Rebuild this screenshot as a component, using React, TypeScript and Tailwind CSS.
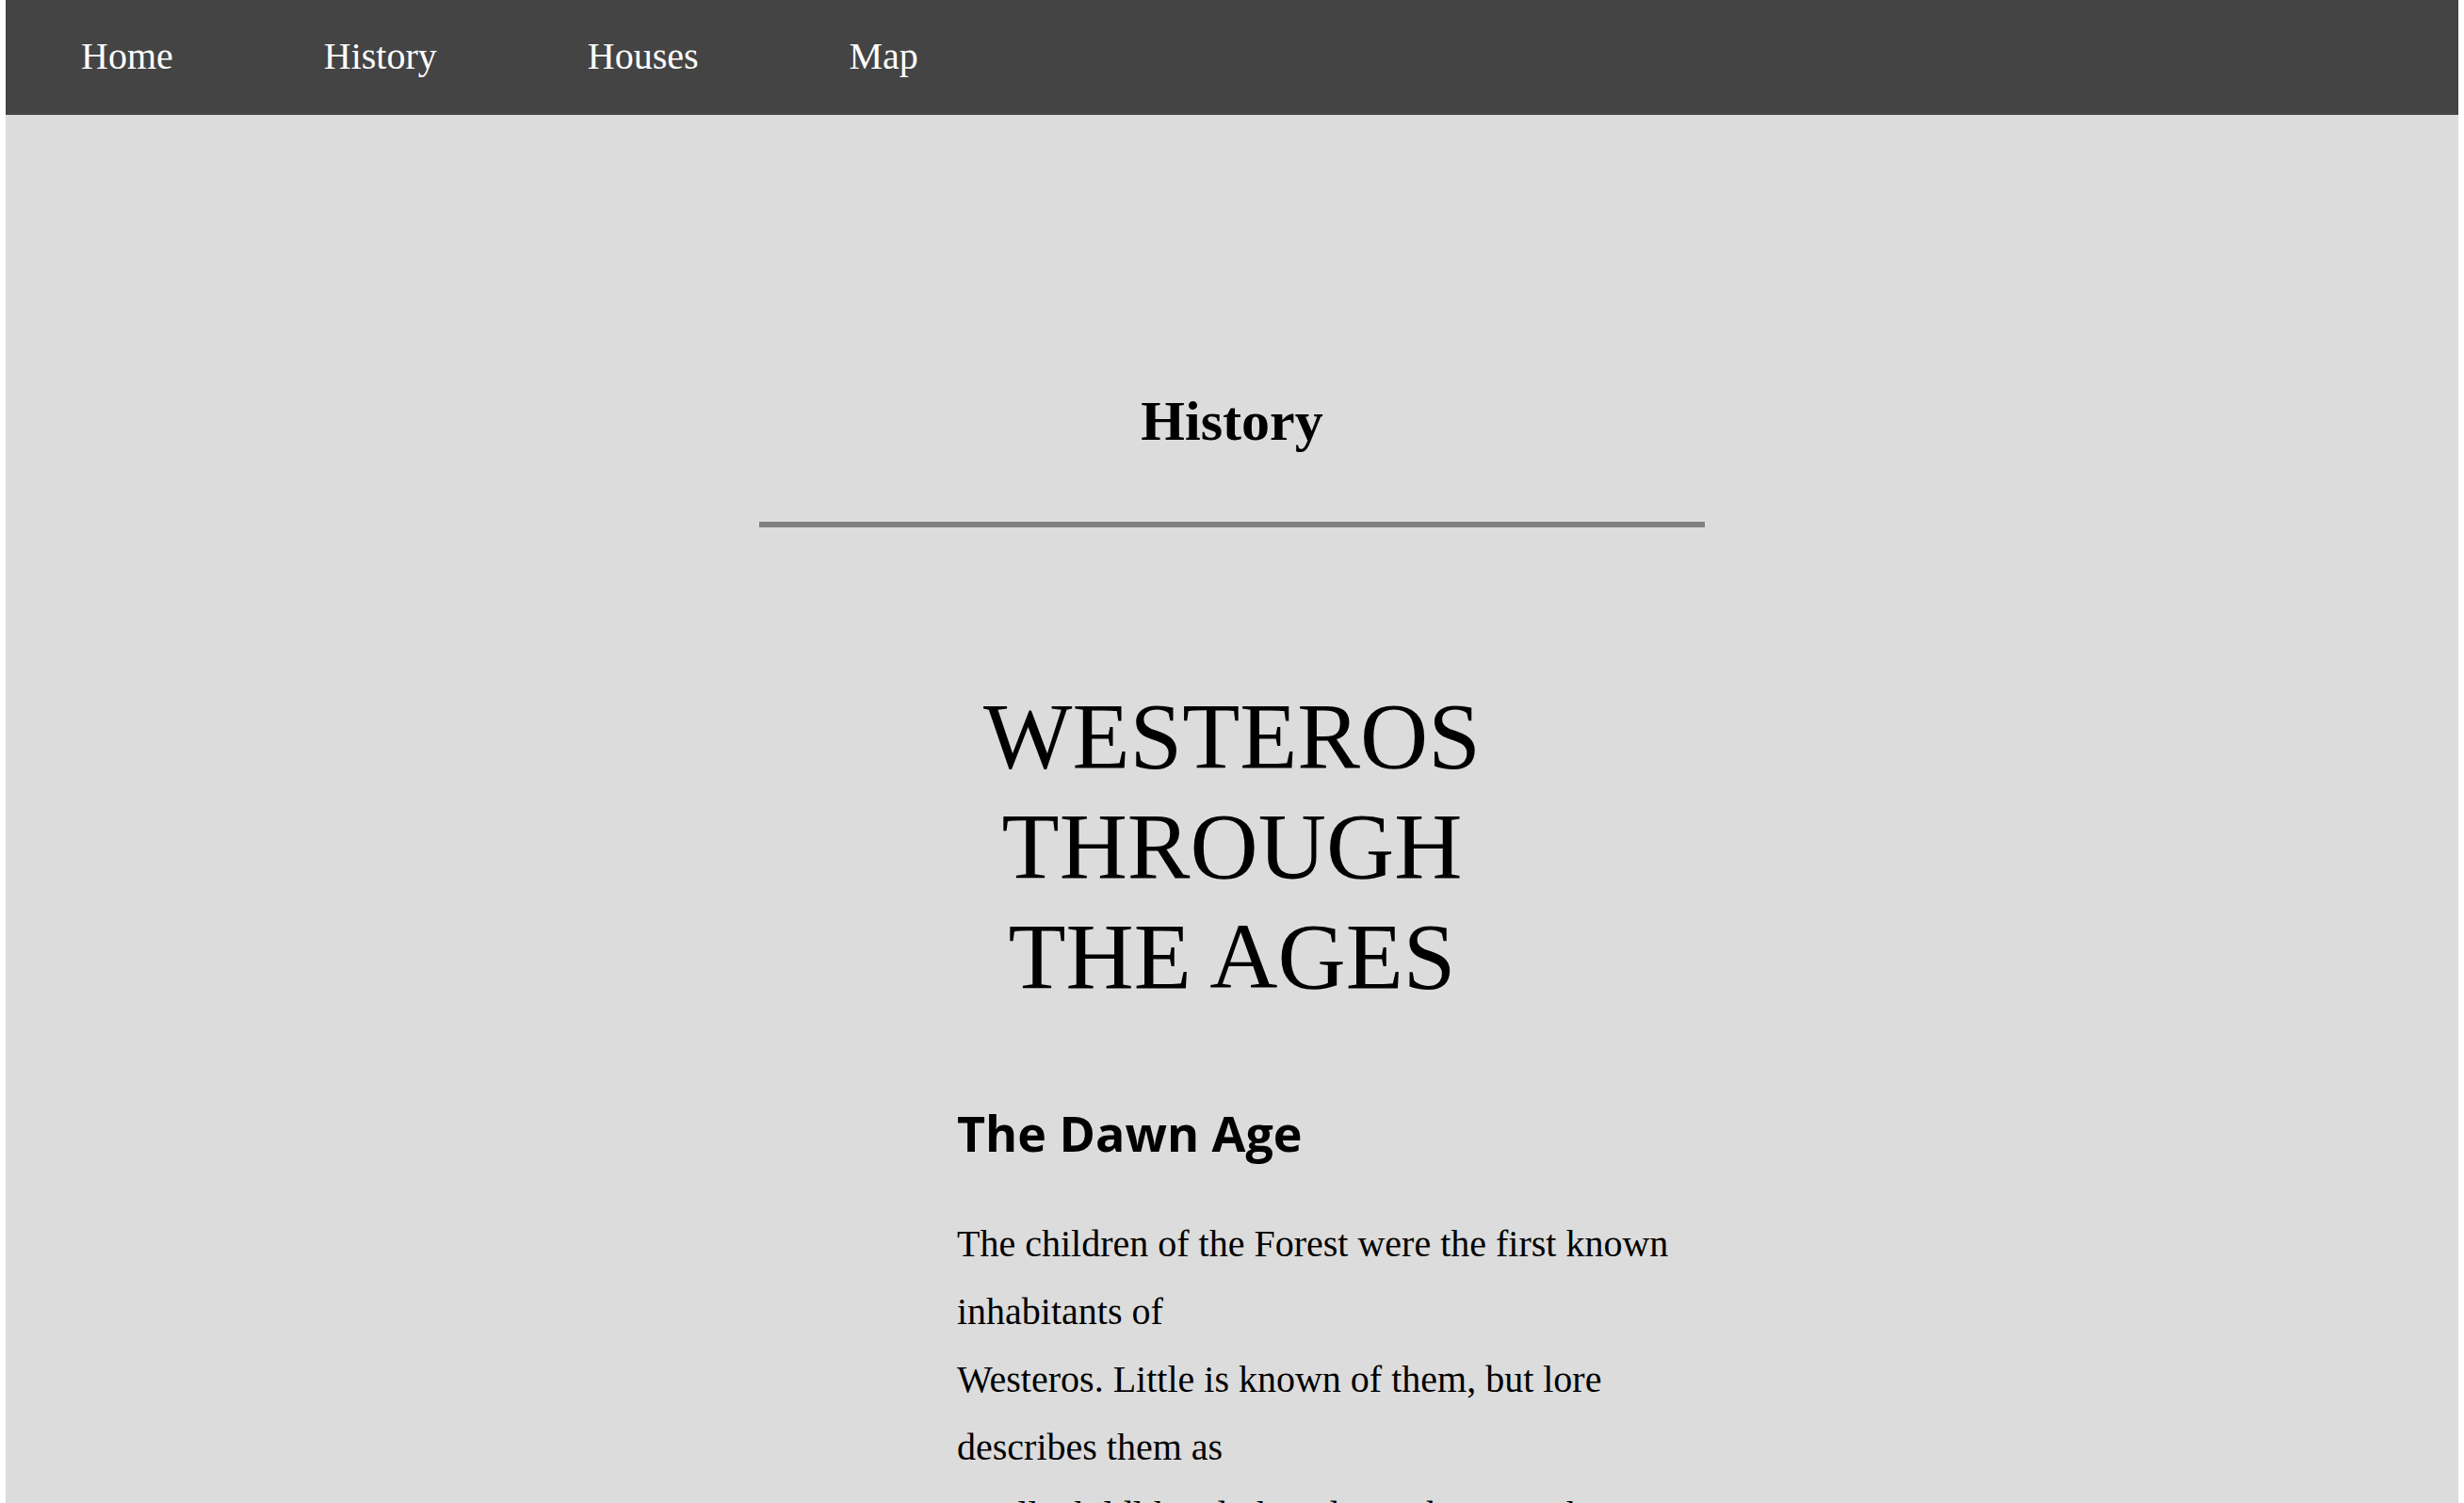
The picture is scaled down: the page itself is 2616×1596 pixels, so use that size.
const links = ['Home', 'History', 'Houses', 'Map']

const serif = "font-['Liberation_Serif','Times_New_Roman',serif]"

const dawnLines = [
  'The children of the Forest were the first known',
  'inhabitants of',
  'Westeros. Little is known of them, but lore',
  'describes them as',
  'small, childlike, dark and wise beings. The',
]

export default function App() {
  return (
    <div className={`mx-[6px] min-h-[1596px] bg-[#dcdcdc] overflow-hidden ${serif}`}>
      <nav className="h-[122px] pb-[3px] bg-[#444444] flex items-center">
        {links.map((l) => (
          <a key={l} href="#" className="px-[80px] text-[40px] text-white leading-[normal]">
            {l}
          </a>
        ))}
      </nav>

      <main className="flex flex-col items-center">
        <h1 className="mt-[291px] text-[60px] font-bold leading-[normal] text-black">History</h1>
        <hr className="mt-[72px] w-[1004px] h-[6px] border-0 bg-[#818181]" />

        <h2 className="mt-[163px] text-[100px] leading-[117px] text-center text-black">
          WESTEROS
          <br />
          THROUGH
          <br />
          THE AGES
        </h2>

        <section className="mt-[99px] w-[584px]">
          <h3 className="font-['Open_Sans',sans-serif] font-bold text-[52px] leading-[60px] text-black">
            The Dawn Age
          </h3>
          <p className="mt-[52px] text-[40px] leading-[72px] text-black">
            {dawnLines.map((line) => (
              <span key={line} className="block whitespace-nowrap">
                {line}
              </span>
            ))}
          </p>
        </section>
      </main>
    </div>
  )
}
